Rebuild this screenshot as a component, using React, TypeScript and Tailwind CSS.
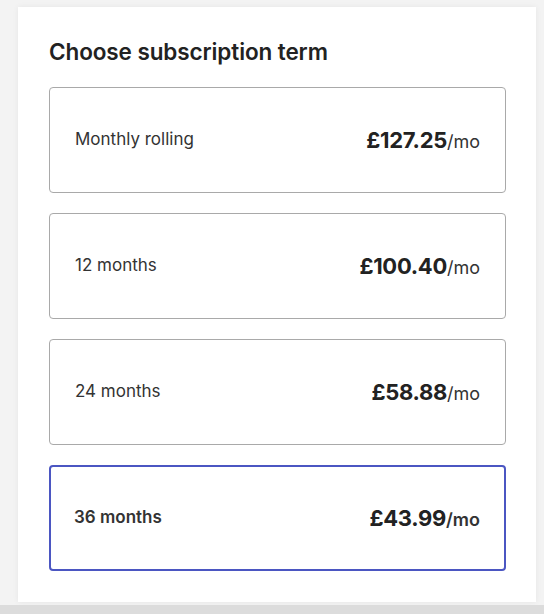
import React from 'react';

interface Term {
  id: string;
  label: string;
  price: string;
}

const terms: Term[] = [
  { id: 'monthly', label: 'Monthly rolling', price: '£127.25' },
  { id: '12', label: '12 months', price: '£100.40' },
  { id: '24', label: '24 months', price: '£58.88' },
  { id: '36', label: '36 months', price: '£43.99' },
];

const App: React.FC = () => {
  const selected = '36';

  return (
    <div
      className="w-[544px] h-[614px] bg-[#f3f3f3] flex flex-col overflow-hidden"
      style={{ fontFamily: 'Inter, "Noto Sans", sans-serif' }}
    >
      <div className="pt-[7px] pl-[18px]">
        <div className="w-[518px] bg-white px-[31px] pt-[31px] pb-[31px] shadow-[0_0_6px_rgba(0,0,0,0.06)]">
          <h2 className="text-[22.5px] leading-[28px] font-semibold text-[#222] tracking-[-0.1px]">
            Choose subscription term
          </h2>
          <div className="mt-[21px] flex flex-col gap-[20px]">
            {terms.map((term) => {
              const isSelected = term.id === selected;
              return (
                <button
                  key={term.id}
                  className={`h-[106px] w-[457px] rounded-[4px] bg-white flex items-center justify-between text-left ${
                    isSelected
                      ? 'border-2 border-[#4b56c2] pl-[23px] pr-[24px]'
                      : 'border border-[#a9a9a9] pl-[25px] pr-[25px]'
                  }`}
                >
                  <span
                    className={`text-[17px] text-[#333] ${
                      isSelected ? 'font-semibold' : 'font-normal'
                    }`}
                  >
                    {term.label}
                  </span>
                  <span className="flex items-baseline text-[#222]">
                    <span className="text-[22px] font-bold tracking-[-0.3px]">{term.price}</span>
                    <span className={`text-[18px] ${isSelected ? 'font-semibold' : 'font-normal'} text-[#333]`}>
                      /mo
                    </span>
                  </span>
                </button>
              );
            })}
          </div>
        </div>
      </div>
      <div className="mt-[3px] flex-1 bg-[#dcdcdc]" />
    </div>
  );
};

export default App;
